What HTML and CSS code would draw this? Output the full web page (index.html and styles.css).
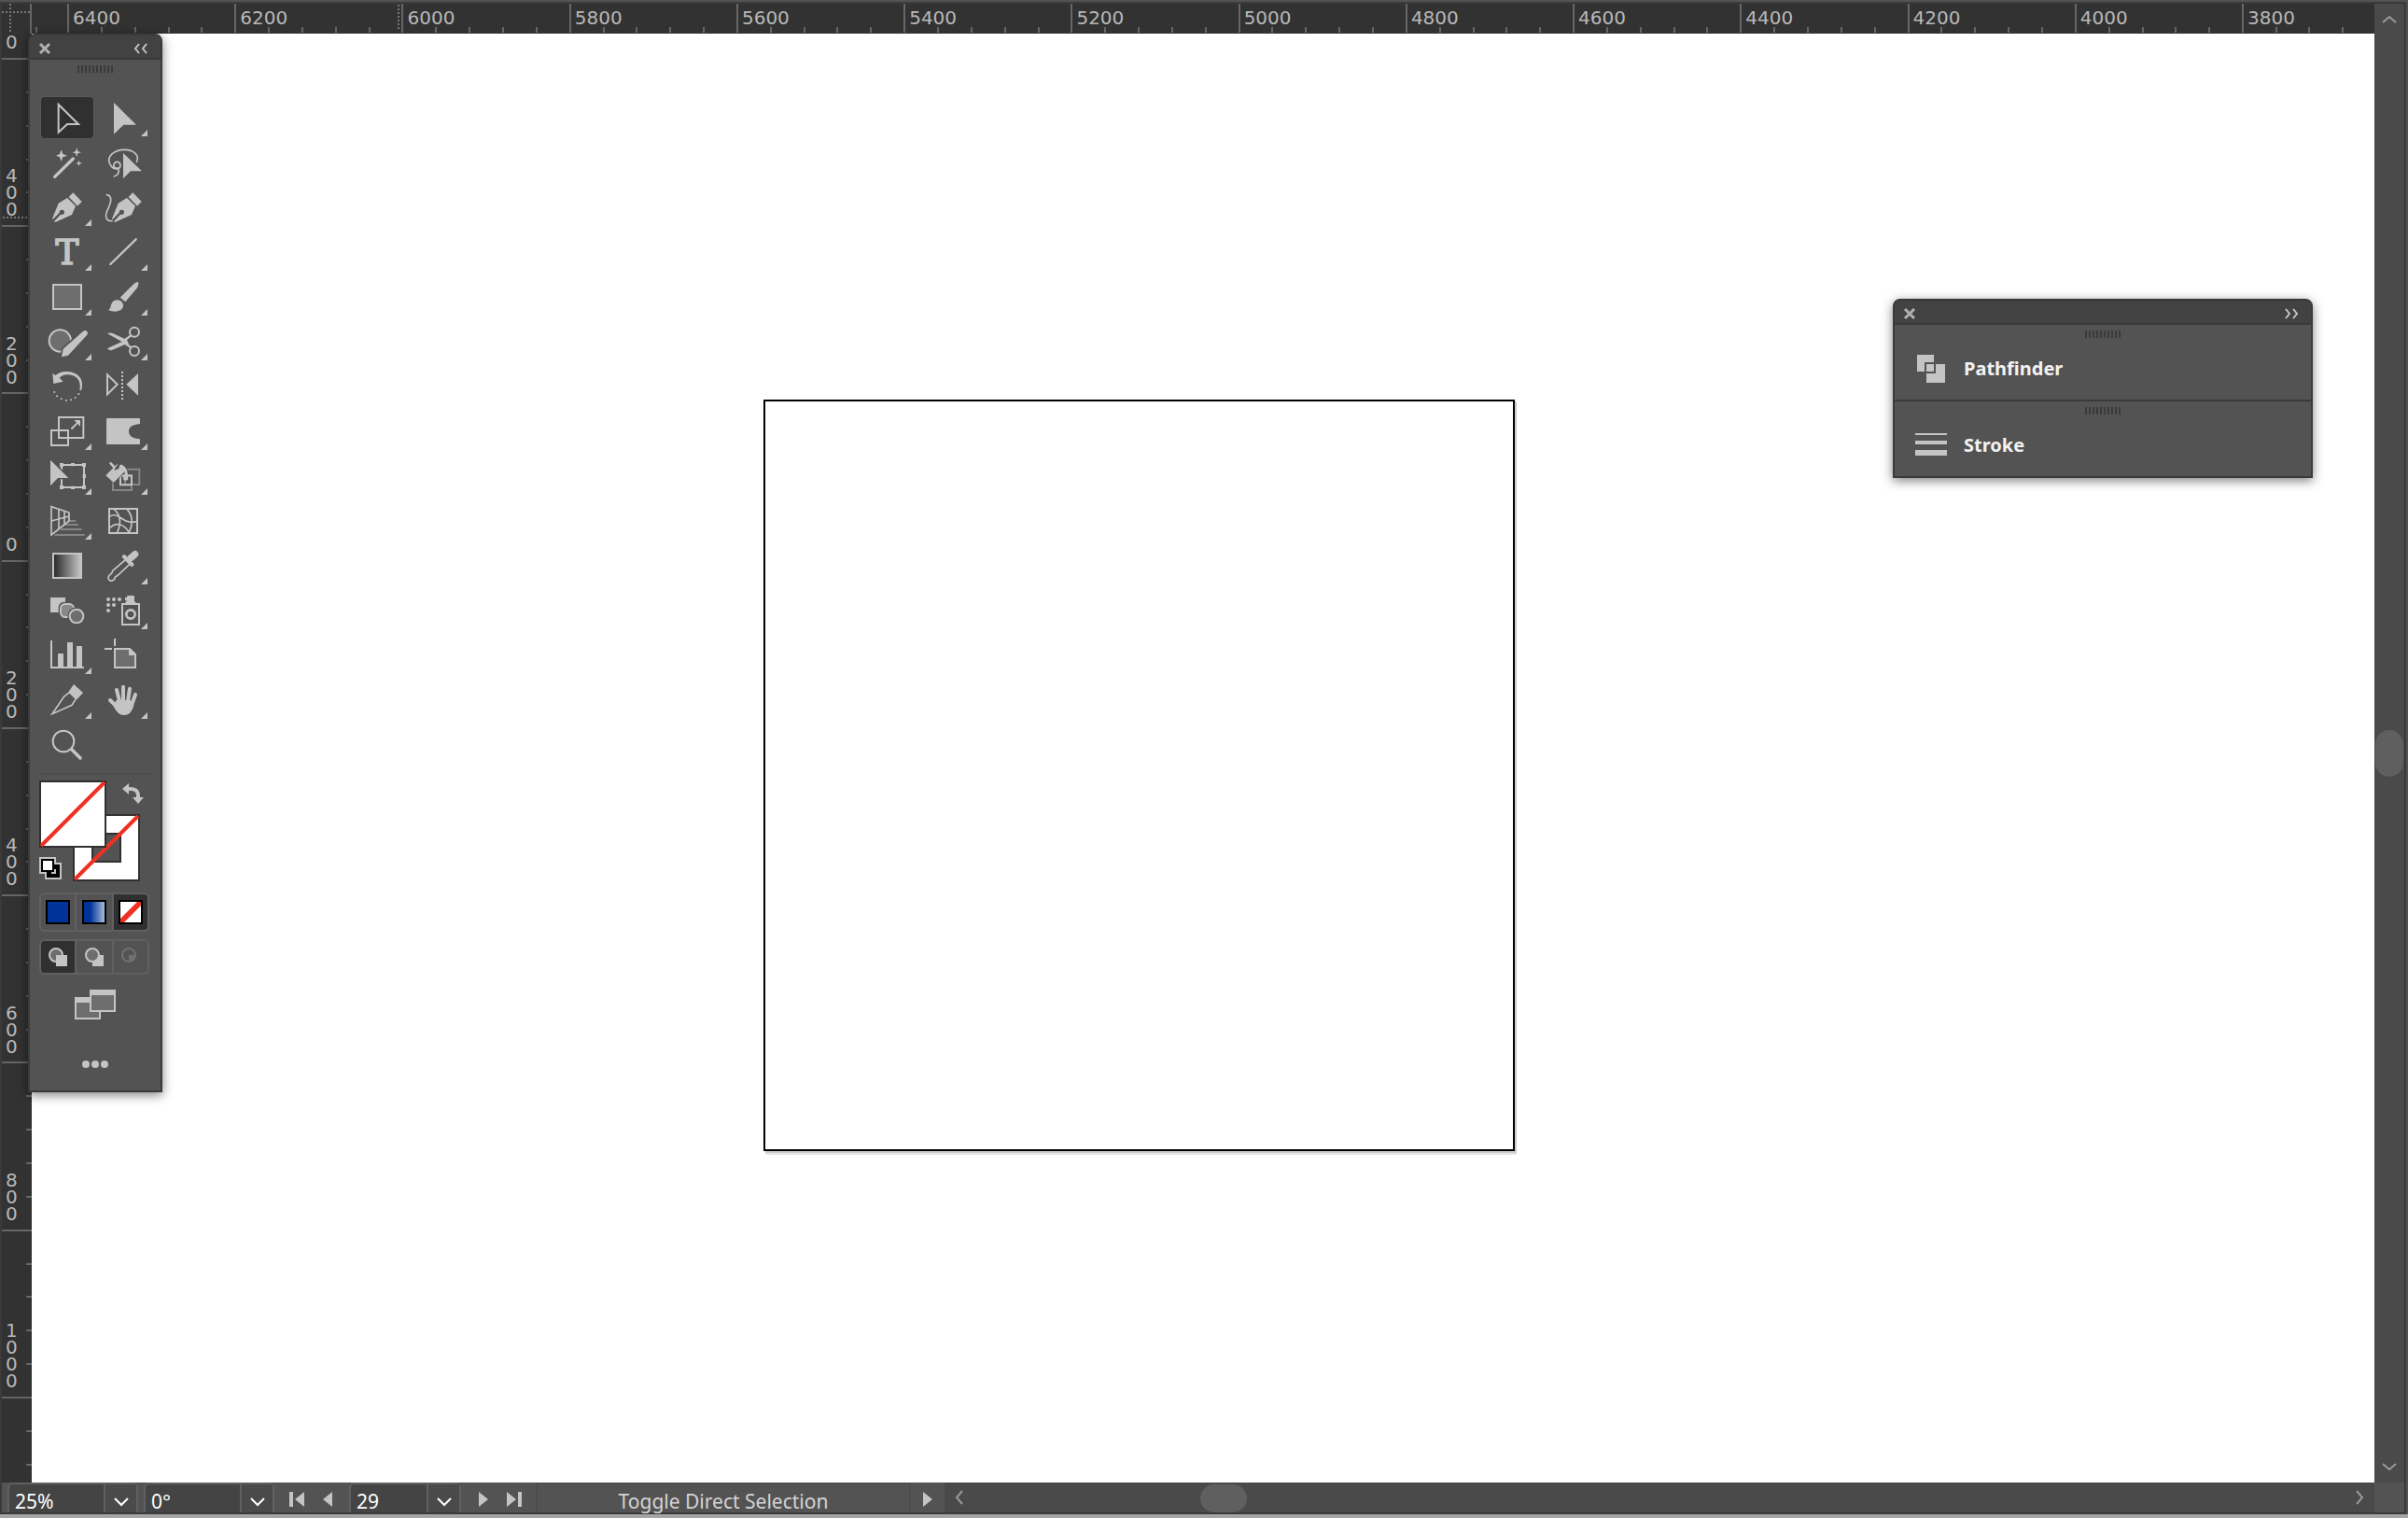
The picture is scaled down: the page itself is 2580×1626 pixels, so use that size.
FILE: index.html
```
<!DOCTYPE html>
<html lang="en">
<head>
  <meta charset="UTF-8">
  <title>Document window</title>
  <meta name="viewport" content="width=device-width, initial-scale=1.0"/>
  <link rel="stylesheet" href="styles.css">
</head>
<body>

<div class="window">
  <!-- TOP RULER -->
  <div class="corner"></div>
  <div class="ruler-x" id="rulerX"><span class="guide-x"></span></div>

  <!-- LEFT RULER -->
  <div class="ruler-y" id="rulerY"><span class="guide-y"></span></div>

  <!-- CANVAS -->
  <main class="canvas">
    <div class="artboard"></div>
  </main>

  <!-- VERTICAL SCROLLBAR -->
  <div class="scroll-y">
    <button aria-label="Scroll up"><svg width="16" height="10" viewBox="0 0 16 10"><path class="thin" d="M1 8l7-6 7 6"/></svg></button>
    <div class="track"><div class="thumb"></div></div>
    <button aria-label="Scroll down"><svg width="16" height="10" viewBox="0 0 16 10"><path class="thin" d="M1 2l7 6 7-6"/></svg></button>
  </div>

  <!-- STATUS BAR -->
  <footer class="status">
    <div class="field">
      <input aria-label="Zoom" value="25%">
      <button aria-label="Zoom levels"><svg width="16" height="10" viewBox="0 0 16 10"><path class="chev" d="M1 1l7 7 7-7"/></svg></button>
    </div>
    <div class="field">
      <input aria-label="Rotation" value="0°">
      <button aria-label="Rotation presets"><svg width="16" height="10" viewBox="0 0 16 10"><path class="chev" d="M1 1l7 7 7-7"/></svg></button>
    </div>
    <div class="pager">
      <button aria-label="First artboard"><svg width="16" height="16" viewBox="0 0 16 16"><path d="M0 0h4v16H0zM16 0v16L6 8z"/></svg></button>
      <button aria-label="Previous artboard"><svg width="16" height="16" viewBox="0 0 16 16"><path d="M13 0v16L3 8z"/></svg></button>
    </div>
    <div class="field field-page">
      <input aria-label="Artboard" value="29">
      <button aria-label="Artboard list"><svg width="16" height="10" viewBox="0 0 16 10"><path class="chev" d="M1 1l7 7 7-7"/></svg></button>
    </div>
    <div class="pager">
      <button aria-label="Next artboard"><svg width="16" height="16" viewBox="0 0 16 16"><path d="M3 0v16l10-8z"/></svg></button>
      <button aria-label="Last artboard"><svg width="16" height="16" viewBox="0 0 16 16"><path d="M12 0h4v16h-4zM0 0v16l10-8z"/></svg></button>
    </div>
    <div class="tool-name">Toggle Direct Selection</div>
    <button class="status-menu" aria-label="Status options"><svg width="16" height="16" viewBox="0 0 16 16"><path d="M3 0v16l10-8z"/></svg></button>
    <div class="scroll-x">
      <button aria-label="Scroll left"><svg width="10" height="16" viewBox="0 0 10 16"><path class="thin" d="M8 1L2 8l6 7"/></svg></button>
      <div class="track"><div class="thumb"></div></div>
      <button aria-label="Scroll right"><svg width="10" height="16" viewBox="0 0 10 16"><path class="thin" d="M2 1l6 7-6 7"/></svg></button>
    </div>
  </footer>
  <div class="resize"></div>
</div>

<!-- TOOLS PANEL -->
<aside class="panel toolbar">
  <header class="panel-head">
    <button aria-label="Close tools"><svg width="14" height="14" viewBox="0 0 14 14"><path class="cross" d="M2 2l10 10M12 2L2 12"/></svg></button>
    <button aria-label="Collapse tools"><svg width="14" height="10" viewBox="0 0 14 10"><path class="dbl" d="M5 0L1 5l4 5M13 0L9 5l4 5"/></svg></button>
  </header>
  <div class="grip"></div>

  <div class="tools">
    <button class="tool active" aria-label="Direct selection"><svg viewBox="42 42 168 132"><path class="ln" stroke-linecap="butt" d="M98 66V155L126 129H162Z"/></svg></button>
    <button class="tool more" aria-label="Selection"><svg viewBox="222 42 168 132"><path d="M276 60V161L307 131H348Z"/></svg></button>

    <button class="tool" aria-label="Magic wand"><svg viewBox="42 186 168 132"><path class="ln" stroke-width="10" d="M86 298L145 240"/><path d="M107 211l5 14 14 5-14 5-5 14-5-14-12-5 12-5zM157 205l3 11 11 4-11 3-3 11-4-11-10-3 10-4zM164 245l2 7 8 2-8 3-2 7-3-7-7-3 7-2z"/></svg></button>
    <button class="tool" aria-label="Lasso"><svg viewBox="222 186 168 132"><path class="ln" stroke-width="5" d="M349 250C360 230 340 211 310 211C275 211 252 235 263 256C272 278 295 276 297 262C297 250 283 246 277 256C272 266 282 274 288 270C296 280 290 294 277 297"/><path d="M306 222V304L330 280H366Z" stroke="#535353" stroke-width="4" paint-order="stroke"/></svg></button>

    <button class="tool more" aria-label="Pen"><svg viewBox="42 330 168 132"><path d="M78 433L98 383L126 366L153 392L141 420L88 444L84 442L105 419A8 8 0 1 0 101 413L80 435Z"/><path d="M145 349L173 378L159 392L131 363Z"/></svg></button>
    <button class="tool" aria-label="Curvature"><svg viewBox="222 330 168 132"><path class="ln" stroke-width="5" d="M253 356C275 360 265 385 256 404C244 430 254 442 270 440"/><g transform="translate(192 0)"><path d="M78 433L98 383L126 366L153 392L141 420L88 444L84 442L105 419A8 8 0 1 0 101 413L80 435Z"/><path d="M145 349L173 378L159 392L131 363Z"/></g></svg></button>

    <button class="tool more" aria-label="Type"><svg viewBox="42 474 168 132"><text class="type" x="126" y="580">T</text></svg></button>
    <button class="tool more" aria-label="Line segment"><svg viewBox="222 474 168 132"><path class="ln" stroke-width="7" d="M265 579L347 499"/></svg></button>

    <button class="tool more" aria-label="Rectangle"><svg viewBox="42 618 168 132"><rect class="box" x="81" y="645" width="90" height="78"/></svg></button>
    <button class="tool more" aria-label="Paintbrush"><svg viewBox="222 618 168 132"><path d="M296 686L338 644Q350 634 354 637Q358 642 350 656L313 700Z"/><path d="M258 726C270 722 262 700 280 695C298 690 310 706 305 718C298 733 275 734 258 726Z"/></svg></button>

    <button class="tool more" aria-label="Shaper"><svg viewBox="42 12 168 132"><circle class="box" cx="103" cy="75" r="35"/><path stroke="#535353" stroke-width="10" paint-order="stroke" d="M108 127L113 101L176 46Q186 38 191 47Q194 53 187 59L129 122Z"/></svg></button>
    <button class="tool more" aria-label="Scissors"><svg viewBox="222 12 168 132"><path d="M255 52Q262 47 272 51L318 72L324 86L310 88L270 105Q262 108 255 100L302 78Z"/><path class="ln" stroke-width="7" d="M308 75L330 59M308 80L330 96"/><circle class="ln" cx="342" cy="47" r="15"/><circle class="ln" cx="342" cy="108" r="15"/></svg></button>

    <button class="tool" aria-label="Rotate"><svg viewBox="42 156 168 132"><path d="M79 180L88 186Q108 170 135 175C172 182 180 210 171 235L166 234C172 205 158 186 130 184Q112 183 101 194L113 206L82 213Z"/><path class="ln" d="M85 240h0M93 253h0M107 262h0M123 267h0M138 265h0M152 258h0M163 246h0"/></svg></button>
    <button class="tool" aria-label="Reflect"><svg viewBox="222 156 168 132"><path class="ln" d="M255 184V247L287 215Z"/><path d="M354 180V251L316 215Z"/><path class="ln" stroke-linecap="butt" stroke-dasharray="6 6" d="M303 174V264"/></svg></button>

    <button class="tool more" aria-label="Scale"><svg viewBox="42 300 168 132"><rect class="ln" x="99" y="321" width="79" height="66"/><rect class="ln" x="75" y="363" width="54" height="48"/><path class="ln" d="M141 357L160 338"/><path d="M148 330H168V350Z"/></svg></button>
    <button class="tool more" aria-label="Width"><svg viewBox="222 300 168 132"><path d="M252 327Q252 324 255 324H357Q360 324 360 327V342C345 345 325 345 324 366C325 388 345 388 360 391V405Q360 408 357 408H255Q252 408 252 405Z"/></svg></button>

    <button class="tool more" aria-label="Free transform"><svg viewBox="42 444 168 132"><path class="ln" d="M108 474H180V546H108Z"/><path d="M102 468h12v12h-12zM138 468h12v10h-12zM174 468h12v12h-12zM176 504h10v12h-10zM102 540h12v12h-12zM138 542h12v10h-12zM174 540h12v12h-12z"/><path stroke="#535353" stroke-width="8" paint-order="stroke" d="M72 458V541L96 516H130Z"/></svg></button>
    <button class="tool more" aria-label="Live paint bucket"><svg viewBox="222 444 168 132"><path class="dim" d="M273 510H333V555H273ZM312 488H358V537H312Z"/><rect class="ln" x="297" y="508" width="36" height="30"/><path stroke="#535353" stroke-width="5" paint-order="stroke" d="M250 508L287 470L317 489L275 531Z"/><path class="ln" stroke-width="8" d="M266 469L280 484M300 477Q318 484 317 518"/><path d="M276 492L288 472L296 468L292 486Z" fill="#535353"/><circle cx="314" cy="516" r="8"/></svg></button>

    <button class="tool more" aria-label="Perspective grid"><svg viewBox="42 588 168 132"><path class="dim" d="M132 654H151M122 666H160M108 681H171M88 699H180"/><path class="ln" stroke-width="5" d="M75 608V699L132 654V627ZM99 617V680M117 622V665M75 654L132 639"/></svg></button>
    <button class="tool" aria-label="Mesh"><svg viewBox="222 588 168 132"><rect class="ln" x="261" y="615" width="90" height="78"/><path class="ln" stroke-width="5" d="M262 640C285 625 300 650 318 655S340 658 350 656M262 677C285 655 310 665 325 692M276 616C300 635 298 665 287 692M318 616C340 640 336 670 324 692"/></svg></button>

    <button class="tool" aria-label="Gradient"><svg viewBox="42 12 168 132"><defs><linearGradient id="grey"><stop offset="0" stop-color="#262626"/><stop offset="1" stop-color="#c8c8c8"/></linearGradient></defs><rect x="81" y="39" width="90" height="78" fill="url(#grey)" stroke="#c4c4c4"/></svg></button>
    <button class="tool more" aria-label="Eyedropper"><svg viewBox="222 12 168 132"><path class="ln" stroke-width="5" d="M312 60L272 94Q272 102 264 107Q256 112 259 121Q264 129 272 125Q280 122 280 114Q288 110 294 104L326 74"/><path class="ln" stroke-width="13" d="M309 49L334 74"/><path class="ln" stroke-width="22" d="M330 53L344 41"/></svg></button>

    <button class="tool" aria-label="Blend"><svg viewBox="42 156 168 132"><path d="M72 180h48v48h-48z"/><rect x="98" y="194" width="56" height="56" rx="18" fill="#535353"/><rect x="105" y="201" width="42" height="42" rx="14" fill="#888" stroke="#c4c4c4"/><circle cx="156" cy="240" r="29" fill="#535353"/><circle class="box" cx="156" cy="240" r="22"/></svg></button>
    <button class="tool more" aria-label="Symbol sprayer"><svg viewBox="222 156 168 132"><rect class="ln" x="303" y="201" width="54" height="66"/><path d="M312 180H318V177Q318 174 321 174H339Q342 174 342 177V192L348 198H312L318 190H312Z"/><circle class="ln" stroke-width="8" cx="330" cy="234" r="14"/><path class="ln" stroke-width="12" d="M258 186h0M276 186h0M294 186h0M258 204h0M276 204h0M258 222h0"/></svg></button>

    <button class="tool more" aria-label="Column graph"><svg viewBox="42 300 168 132"><path d="M72 318h6v84h102v6H72zM96 362q0-2 2-2h14q2 0 2 2v42H96zM126 326q0-2 2-2h14q2 0 2 2v78h-18zM156 338q0-2 2-2h14q2 0 2 2v66h-18z"/></svg></button>
    <button class="tool" aria-label="Artboard tool"><svg viewBox="222 300 168 132"><path class="box" d="M279 345H327L345 363V405H279Z"/><path d="M324 342V366H348ZM276 312h6v24h-6zM246 342h24v6h-24z"/></svg></button>

    <button class="tool more" aria-label="Slice"><svg viewBox="42 444 168 132"><path class="ln" stroke-width="5" d="M78 554L116 498L134 485L154 505L141 526Z"/><path d="M147 459L177 486L158 507L130 484Z"/></svg></button>
    <button class="tool more" aria-label="Hand"><svg viewBox="222 444 168 132"><path class="ln" stroke-width="12" d="M285 477L296 520M306 467V520M327 473L320 520M345 492L330 535M264 510L290 535"/><path d="M284 510H330L340 524Q335 546 324 554Q308 562 294 554Q284 548 274 528Z"/></svg></button>

    <button class="tool" aria-label="Zoom"><svg viewBox="42 588 168 132"><circle class="ln" cx="114" cy="642" r="34"/><path class="ln" stroke-width="11" d="M141 669L168 696"/></svg></button>
  </div>

  <!-- FILL AND STROKE -->
  <div class="proxies">
    <button class="stroke-box" aria-label="Stroke"><svg width="72" height="72" viewBox="0 0 72 72"><path fill-rule="evenodd" class="sheet" d="M1 1H71V71H1ZM21 21H51V51H21Z"/><path class="none" d="M2 70L70 2"/></svg></button>
    <button class="fill-box" aria-label="Fill"><svg width="72" height="72" viewBox="0 0 72 72"><path class="sheet" d="M1 1H71V71H1Z"/><path class="none" d="M2 70L70 2"/></svg></button>
    <button class="swap" aria-label="Swap fill and stroke"><svg width="24" height="24" viewBox="0 0 24 24"><path d="M0 6L7 0V4H9Q19 4 19 14V15H23L17 22L11 15H15V13Q15 8 9 8H7V12Z"/></svg></button>
    <button class="reset" aria-label="Default fill and stroke"><svg width="24" height="24" viewBox="0 0 24 24"><path d="M0 0H18V6H24V24H6V18H0Z"/><path fill="#000" d="M2 2H16V8H22V22H8V16H2Z"/><path fill="#fff" d="M4 4H14V14H4Z"/><path class="ln" d="M13 17H17V13"/></svg></button>
  </div>

  <div class="group swatches">
    <button aria-label="Color"><span class="swatch blue"></span></button>
    <button aria-label="Gradient fill"><span class="swatch fade"></span></button>
    <button class="active" aria-label="None"><svg width="26" height="26" viewBox="0 0 26 26"><path fill="#000" d="M0 0H26V26H0Z"/><path fill="#fff" d="M2 2H24V24H2Z"/><path fill="#ee3124" d="M2 24V20L20 2H24V6L6 24Z"/></svg></button>
  </div>

  <div class="group modes">
    <button class="active" aria-label="Draw normal"><svg width="20" height="20" viewBox="0 0 20 20"><circle class="box" cx="8" cy="8" r="7"/><path d="M8 8h12v12H8z"/></svg></button>
    <button aria-label="Draw behind"><svg width="20" height="20" viewBox="0 0 20 20"><path d="M8 8h12v12H8z"/><circle class="box" cx="8" cy="8" r="7"/></svg></button>
    <button aria-label="Draw inside" disabled><svg width="20" height="20" viewBox="0 0 20 20"><circle class="off" cx="8" cy="8" r="7"/><path fill="#707070" d="M8 8h7q0 5-7 7z"/></svg></button>
  </div>

  <button class="screen" aria-label="Screen mode"><svg width="44" height="32" viewBox="0 0 44 32"><rect class="box" x="1" y="9" width="26" height="22"/><path d="M0 8h28v6H0z"/><rect class="box" x="17" y="1" width="26" height="22"/><path d="M16 0h28v6H16z"/></svg></button>
  <button class="edit" aria-label="Edit toolbar"><svg width="28" height="8" viewBox="0 0 28 8"><circle cx="4" cy="4" r="4"/><circle cx="14" cy="4" r="4"/><circle cx="24" cy="4" r="4"/></svg></button>
</aside>

<!-- COLLAPSED PANELS -->
<aside class="panel dock">
  <header class="panel-head">
    <button aria-label="Close panels"><svg width="14" height="14" viewBox="0 0 14 14"><path class="cross" d="M2 2l10 10M12 2L2 12"/></svg></button>
    <button aria-label="Expand panels"><svg width="14" height="10" viewBox="0 0 14 10"><path class="dbl" d="M1 0l4 5-4 5M9 0l4 5-4 5"/></svg></button>
  </header>
  <section>
    <div class="grip"></div>
    <button class="entry"><svg width="34" height="30" viewBox="0 0 34 30"><path d="M2 0H20V8H10V18H2ZM12 10H20V18H12ZM22 10H32V30H12V20H22Z"/></svg>Pathfinder</button>
  </section>
  <section>
    <div class="grip"></div>
    <button class="entry"><svg width="34" height="30" viewBox="0 0 34 30"><path d="M0 2h34v2H0zM0 10h34v4H0zM0 20h34v6H0z"/></svg>Stroke</button>
  </section>
</aside>

<script>
  const across = [6400, 6200, 6000, 5800, 5600, 5400, 5200, 5000, 4800, 4600, 4400, 4200, 4000, 3800];
  const down = ["0", "400", "200", "0", "200", "400", "600", "800", "1000", ""];

  function addSegment(ruler, text, ticks, extra) {
    const seg = document.createElement("div");
    seg.className = "seg " + extra;
    for (let i = 0; i < ticks; i++) {
      seg.appendChild(document.createElement("i"));
    }
    const label = document.createElement("span");
    label.className = "num";
    label.innerHTML = text;
    seg.appendChild(label);
    ruler.appendChild(seg);
  }

  const rulerX = document.getElementById("rulerX");
  addSegment(rulerX, "", 1, "head");
  across.forEach((n, i) => {
    const last = i === across.length - 1;
    addSegment(rulerX, n, last ? 4 : 5, last ? "tail" : "");
  });

  const rulerY = document.getElementById("rulerY");
  down.forEach((n, i) => {
    const last = i === down.length - 1;
    const extra = i === 0 ? "head" : last ? "tail" : "";
    addSegment(rulerY, n.split("").join("<br>"), i === 0 ? 0 : last ? 2 : 5, extra);
  });
</script>
</body>
</html>
```
FILE: styles.css
```
* {
  box-sizing: border-box;
}

body {
  margin: 0;
  height: 100vh;
  overflow: hidden;
  position: relative;
  background: #a5a5a5;
  font-family: "Noto Sans", "Open Sans", sans-serif;
  font-size: 20px;
  color: #fff;
}

button {
  display: flex;
  align-items: center;
  justify-content: center;
  padding: 0;
  border: none;
  background: none;
  color: inherit;
  font: inherit;
}

svg {
  display: block;
  fill: #c4c4c4;
  stroke-width: 2px;
  overflow: visible;
}

/* window frame */
.window {
  height: calc(100vh - 4px);
  display: grid;
  grid-template-columns: 32px 1fr 32px;
  grid-template-rows: 32px 1fr 32px;
  padding: 2px;
  border-top: 2px solid #535353;
  border-right: 2px solid #535353;
  background: #3a3a3a;
}

/* rulers */
.corner {
  border-right: 2px solid #666;
  background:
    repeating-linear-gradient(to bottom, #777 0 2px, transparent 2px 4px) 8px 0 / 2px 100% no-repeat,
    repeating-linear-gradient(to right, #777 0 2px, transparent 2px 4px) 0 8px / 100% 2px no-repeat,
    #323232;
}

.ruler-x, .ruler-y {
  position: relative;
  display: flex;
  background: #323232;
  color: #b8b8b8;
  font-family: "DejaVu Sans", sans-serif;
  font-size: 20px;
  line-height: 18px;
}

.ruler-y {
  flex-direction: column;
}

.seg {
  position: relative;
  display: flex;
  flex: 1;
}

.seg i {
  flex: 1;
}

.num {
  position: absolute;
}

.ruler-x .seg {
  align-items: flex-end;
}

.ruler-x .seg i {
  height: 6px;
  margin-bottom: 1px;
  border-left: 2px solid #666;
}

.ruler-x .seg i:first-child {
  height: 31px;
}

.ruler-x .head {
  flex: 0 0 38px;
  padding-left: 4px;
}

.ruler-x .head i:first-child {
  height: 6px;
}

.ruler-x .tail {
  flex: 0 0 142px;
}

.ruler-x .num {
  left: 6px;
  top: 6px;
}

.ruler-y .seg {
  flex-direction: column;
  align-items: flex-end;
}

.ruler-y .seg i {
  width: 6px;
  border-bottom: 2px solid #666;
}

.ruler-y .seg i:nth-child(5) {
  width: 32px;
}

.ruler-y .head {
  flex: 0 0 28px;
  border-bottom: 2px solid #666;
}

.ruler-y .tail {
  flex: 0 0 90px;
  padding-bottom: 18px;
}

.ruler-y .num {
  left: 4px;
  bottom: 10px;
}

.ruler-y .head .num {
  bottom: 8px;
}

/* cursor markers on the rulers */
.guide-x, .guide-y {
  position: absolute;
  background: repeating-linear-gradient(to bottom, #777 0 2px, transparent 2px 4px);
}

.guide-x {
  left: 392px;
  top: 1px;
  width: 2px;
  height: 28px;
}

.guide-y {
  left: 1px;
  top: 196px;
  width: 30px;
  height: 2px;
  background: repeating-linear-gradient(to right, #777 0 2px, transparent 2px 4px);
}

/* canvas */
.canvas {
  background: #fff;
  position: relative;
}

.artboard {
  position: absolute;
  left: 784px;
  top: 392px;
  width: 805px;
  height: 805px;
  border: 2px solid #000;
  box-shadow: 2px 2px 0 #ccc, 2px 4px 0 #e5e5e5;
}

/* scrollbars */
.scroll-y {
  grid-column: 3;
  grid-row: 1 / 3;
  display: flex;
  flex-direction: column;
  background: #4a4a4a;
}

.scroll-y button {
  height: 34px;
}

.track {
  flex: 1;
  display: flex;
}

.thumb {
  background: #5f5f5f;
  border-radius: 15px;
}

.scroll-y .track {
  flex-direction: column;
  padding-top: 744px;
}

.scroll-y .thumb {
  width: 30px;
  height: 50px;
  margin: 0 1px;
}

.scroll-x {
  flex: 1;
  display: flex;
  background: #4a4a4a;
}

.scroll-x button {
  width: 32px;
}

.scroll-x .track {
  padding: 2px 0 0 242px;
}

.scroll-x .thumb {
  width: 50px;
  height: 30px;
}

.thin, .chev, .cross, .dbl {
  fill: none;
  stroke: #999;
}

.chev {
  stroke: #fff;
}

.cross {
  stroke: #b0b0b0;
  stroke-width: 3px;
}

.dbl {
  stroke: #c4c4c4;
}

/* status bar */
.status {
  grid-column: 1 / 3;
  display: flex;
  background: #535353;
  padding-left: 6px;
  font-size: 21px;
  line-height: 28px;
}

.field {
  display: flex;
  flex: none;
  width: 140px;
  margin-right: 6px;
  border: 2px solid #606060;
  border-bottom: none;
  border-radius: 6px 6px 0 0;
  background: #444;
}

.field input {
  flex: 1;
  min-width: 0;
  padding: 6px 0 0 6px;
  border: none;
  background: none;
  color: #fff;
  font: inherit;
  line-height: 24px;
}

.field button {
  width: 35px;
  padding-top: 8px;
  border-left: 2px solid #606060;
  background: #4a4a4a;
}

.pager {
  display: flex;
  flex: none;
  justify-content: space-between;
  width: 49px;
  margin: 4px 15px 0 10px;
}

.field-page {
  width: 120px;
}

.tool-name {
  flex: none;
  width: 402px;
  padding-top: 4px;
  border: 2px solid #4d4d4d;
  border-bottom: none;
  text-align: center;
  color: #d4d4d4;
}

.status-menu {
  flex: none;
  width: 36px;
  padding: 4px 0 0;
}

.resize {
  background: #535353;
}

/* floating panels */
.panel {
  position: absolute;
  background: #535353;
  border: 2px solid #3a3a3a;
  border-radius: 8px 8px 0 0;
  box-shadow: 0 3px 12px rgba(0,0,0,0.5);
}

.panel-head {
  display: flex;
  align-items: center;
  justify-content: space-between;
  height: 26px;
  padding: 3px 14px 0 9px;
  background: #424242;
  border-bottom: 2px solid #3a3a3a;
  border-radius: 6px 6px 0 0;
}

.grip {
  width: 38px;
  height: 8px;
  margin: 6px auto 0;
  background: repeating-linear-gradient(to right, #3a3a3a 0 2px, transparent 2px 4px);
}

.toolbar {
  left: 30px;
  top: 36px;
  width: 144px;
  padding-bottom: 24px;
}

.tools {
  display: grid;
  grid-template-columns: 56px 56px;
  gap: 4px;
  margin: 26px 12px 0;
}

.tool {
  position: relative;
  width: 56px;
  height: 44px;
  border-radius: 4px;
}

/* tool icons are drawn at three units to the pixel */
.tool svg {
  width: 56px;
  height: 44px;
  stroke-width: 6px;
  stroke-linecap: round;
}

.active {
  background: #303030;
}

.tool.active {
  box-shadow: 0 0 0 1px #5a5a5a;
}

/* flyout corner */
.more::after {
  content: "";
  position: absolute;
  right: 2px;
  bottom: 2px;
  border-bottom: 7px solid #c4c4c4;
  border-left: 7px solid transparent;
}

.ln {
  fill: none;
  stroke: #c4c4c4;
}

.box {
  fill: #6e6e6e;
  stroke: #c4c4c4;
}

.dim {
  fill: none;
  stroke: #858585;
}

.off {
  fill: none;
  stroke: #707070;
}

.type {
  font-family: "DejaVu Serif", serif;
  font-size: 112px;
  text-anchor: middle;
  stroke: #c4c4c4;
  stroke-width: 5px;
}

/* fill / stroke boxes overlap by half */
.proxies {
  display: grid;
  grid-template-columns: 36px 36px 41px;
  grid-template-rows: 36px 36px 36px;
  margin: 8px 10px 0;
  padding-top: 6px;
  border-top: 2px solid #4d4d4d;
}

.fill-box {
  grid-area: 1 / 1 / 3 / 3;
}

.stroke-box {
  grid-area: 2 / 2 / 4 / 4;
  justify-self: start;
}

.swap {
  grid-area: 1 / 3;
  justify-content: flex-end;
  padding-bottom: 6px;
}

.reset {
  grid-area: 3 / 1;
  justify-content: flex-start;
  padding-top: 8px;
}

.sheet {
  fill: #fff;
  stroke: #303030;
}

.none {
  stroke: #ee3124;
  stroke-width: 4px;
}

.group {
  display: grid;
  grid-template-columns: 36px 40px 1fr;
  height: 42px;
  width: 118px;
  margin: 12px 0 0 10px;
  border: 2px solid #606060;
  border-radius: 6px;
  overflow: hidden;
}

.group button + button {
  border-left: 2px solid #606060;
}

.modes {
  height: 38px;
  margin-top: 8px;
}

.swatch {
  width: 26px;
  height: 26px;
  border: 2px solid #000;
}

.blue {
  background: #003399;
}

.fade {
  background: linear-gradient(to right, #003399 30%, #a8bcd8);
}

.screen {
  margin: 16px auto 0;
}

.edit {
  margin: 44px auto 0;
}

.dock {
  right: 102px;
  top: 320px;
  width: 450px;
}

.dock section {
  height: 80px;
  padding-top: 6px;
}

.dock section + section {
  height: 82px;
  border-top: 2px solid #3a3a3a;
}

.dock .grip {
  margin-top: 0;
}

.entry {
  gap: 18px;
  margin: 18px 0 0 22px;
  line-height: 30px;
  font-weight: bold;
  color: #f2f2f2;
}
```
